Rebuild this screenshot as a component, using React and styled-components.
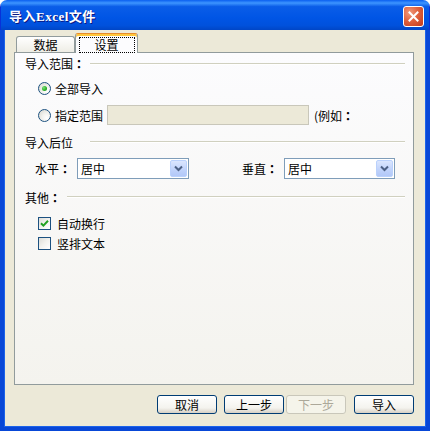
import React from "react";
import styled, { createGlobalStyle } from "styled-components";

const GlobalStyle = createGlobalStyle`
  html, body {
    margin: 0;
    padding: 0;
    background: #ffffff;
  }
  body {
    font-family: "Noto Sans CJK SC", "Liberation Sans", sans-serif;
    font-size: 12px;
    color: #000;
  }
`;

const Window = styled.div`
  width: 430px;
  height: 431px;
  display: flex;
  flex-direction: column;
  border-radius: 7px 7px 0 0;
  overflow: hidden;
`;

const TitleBar = styled.div`
  height: 30px;
  flex-shrink: 0;
  display: flex;
  align-items: center;
  justify-content: space-between;
  padding: 0 5px 0 8px;
  box-sizing: border-box;
  background: linear-gradient(
    #0a5ff0 0%,
    #3d95ff 10%,
    #0a5de8 22%,
    #0055e5 60%,
    #0051dc 85%,
    #0046c6 100%
  );
  border-left: 1px solid #0831d9;
  border-right: 1px solid #0831d9;
`;

const Title = styled.span`
  color: #fff;
  font-family: "Liberation Serif", "Noto Sans CJK SC", serif;
  font-weight: bold;
  font-size: 13px;
  text-shadow: 1px 1px 0 #0a1883;
  letter-spacing: 0.5px;
`;

const CloseButton = styled.button`
  width: 21px;
  height: 21px;
  padding: 0;
  border: 1px solid #fff;
  border-radius: 3px;
  background: radial-gradient(circle at 30% 30%, #f09a7c 0%, #e0623e 45%, #c1391b 100%);
  display: flex;
  align-items: center;
  justify-content: center;
  margin-top: 2px;
`;

const Frame = styled.div`
  flex: 1;
  display: flex;
  flex-direction: column;
  background: #ece9d8;
  border: 4px solid #0847d7;
  border-top: none;
  box-shadow: inset 1px 0 0 #1b63ea, inset -1px 0 0 #1b63ea, inset 0 -1px 0 #1b63ea;
`;

const TabStrip = styled.div`
  display: flex;
  align-items: flex-end;
  height: 20px;
  margin: 3px 0 0 10px;
  padding-left: 2px;
  position: relative;
  z-index: 2;
`;

const Tab = styled.div`
  box-sizing: border-box;
  height: ${(p) => (p.$active ? "20px" : "16px")};
  width: ${(p) => (p.$active ? "63px" : "59px")};
  margin-bottom: ${(p) => (p.$active ? "0" : "1px")};
  border: 1px solid #919b9c;
  border-bottom: none;
  border-top: ${(p) => (p.$active ? "1px solid #e68b2c" : "1px solid #919b9c")};
  border-radius: 3px 3px 0 0;
  background: ${(p) =>
    p.$active ? "#fcfcfe" : "linear-gradient(#ffffff, #eeede5)"};
  box-shadow: ${(p) => (p.$active ? "inset 0 2px 0 #ffc73c" : "none")};
  display: flex;
  align-items: center;
  justify-content: center;
  padding-top: ${(p) => (p.$active ? "2px" : "0")};
`;

const FocusLabel = styled.span`
  box-sizing: border-box;
  width: 56px;
  height: 16px;
  border: 1px dotted #000;
  display: flex;
  align-items: center;
  justify-content: center;
  line-height: 1;
`;

const Panel = styled.div`
  box-sizing: border-box;
  width: 400px;
  height: 333px;
  margin: -1px 0 0 10px;
  border: 1px solid #919b9c;
  background: linear-gradient(#fcfcfe, #f4f3ee);
  padding: 2px 8px 0 10px;
  display: flex;
  flex-direction: column;
`;

const SectionHeader = styled.div`
  height: 16px;
  display: flex;
  align-items: center;
  margin-top: ${(p) => p.$top || 0}px;
  white-space: nowrap;
`;

// full-width colon, centred in its cell
const Colon = styled.span`
  font-family: "Noto Sans CJK TC", "Noto Sans CJK SC", sans-serif;
  font-weight: bold;
`;

const Rule = styled.div`
  flex: 1;
  height: 0;
  border-top: 1px solid #d0d0bf;
  border-bottom: 1px solid #fff;
  margin-left: ${(p) => p.$gap}px;
  margin-top: ${(p) => p.$shift || 0}px;
`;

const OptionRow = styled.div`
  display: flex;
  align-items: center;
  height: ${(p) => p.$h || 18}px;
  margin-top: ${(p) => p.$top || 0}px;
  padding-left: 13px;
  white-space: nowrap;
`;

const Radio = styled.span`
  box-sizing: border-box;
  width: 13px;
  height: 13px;
  border-radius: 50%;
  border: 1px solid #1c5180;
  background: radial-gradient(circle at 70% 70%, #ffffff 0%, #f2f2ee 40%, #d4d4cc 100%);
  display: flex;
  align-items: center;
  justify-content: center;
  flex-shrink: 0;

  &::after {
    content: "";
    width: 5px;
    height: 5px;
    border-radius: 50%;
    background: radial-gradient(circle at 35% 35%, #7be078 0%, #29ad25 60%, #1f8d1b 100%);
    display: ${(p) => (p.$checked ? "block" : "none")};
  }
`;

const Checkbox = styled.span`
  box-sizing: border-box;
  width: 13px;
  height: 13px;
  border: 1px solid #1c5180;
  background: linear-gradient(135deg, #dcdcd7 0%, #f2f2ee 50%, #ffffff 100%);
  display: flex;
  align-items: center;
  justify-content: center;
  flex-shrink: 0;
`;

const OptionText = styled.span`
  margin-left: ${(p) => p.$gap || 4}px;
`;

const RangeInput = styled.div`
  box-sizing: border-box;
  width: 202px;
  height: 20px;
  margin-left: 4px;
  border: 1px solid #c9c7ba;
  background: #ece9d8;
`;

const Hint = styled.span`
  margin-left: 5px;
`;

const ComboRow = styled.div`
  display: flex;
  align-items: center;
  height: 21px;
  margin-top: 8px;
  padding-left: 10px;
`;

const ComboLabel = styled.span`
  margin-left: ${(p) => p.$gap || 0}px;
  white-space: nowrap;
`;

const Combo = styled.div`
  box-sizing: border-box;
  width: ${(p) => p.$w}px;
  height: 21px;
  margin-left: 6px;
  border: 1px solid #7f9db9;
  background: #fff;
  display: flex;
  align-items: center;
  padding: 1px;
`;

const ComboValue = styled.span`
  flex: 1;
  padding-left: 2px;
`;

const DropButton = styled.span`
  box-sizing: border-box;
  width: 17px;
  height: 17px;
  border: 1px solid #bad1fc;
  border-radius: 2px;
  background: linear-gradient(#dbe6fe, #bfd2fb 60%, #b2c8f8);
  display: flex;
  align-items: center;
  justify-content: center;
`;

const ButtonRow = styled.div`
  display: flex;
  justify-content: flex-end;
  margin: 10px 12px 0 0;
`;

const Button = styled.button`
  box-sizing: border-box;
  width: 60px;
  height: 19px;
  margin-left: ${(p) => p.$gap || 0}px;
  padding: 0;
  font-family: "Noto Sans CJK SC", "Liberation Sans", sans-serif;
  font-size: 12px;
  line-height: 1;
  border-radius: 3px;
  border: 1px solid ${(p) => (p.disabled ? "#c9c7ba" : "#003c74")};
  color: ${(p) => (p.disabled ? "#aca899" : "#000")};
  background: ${(p) =>
    p.disabled ? "#f5f4ea" : "linear-gradient(#ffffff, #f4f3ee 70%, #d6d0c5)"};
`;

const Chevron = () => (
  <svg width="9" height="7" viewBox="0 0 9 7">
    <path d="M1 1.5 L4.5 5 L8 1.5" fill="none" stroke="#4d6185" strokeWidth="2" />
  </svg>
);

const CloseX = () => (
  <svg width="11" height="11" viewBox="0 0 11 11">
    <path d="M1.5 1.5 L9.5 9.5 M9.5 1.5 L1.5 9.5" stroke="#fff" strokeWidth="2" strokeLinecap="square" />
  </svg>
);

const Tick = () => (
  <svg width="9" height="9" viewBox="0 0 9 9">
    <path d="M1 4.2 L3.4 6.6 L8 1.8" fill="none" stroke="#21a121" strokeWidth="2" />
  </svg>
);

export default function App() {
  return (
    <>
      <GlobalStyle />
      <Window>
        <TitleBar>
          <Title>导入Excel文件</Title>
          <CloseButton>
            <CloseX />
          </CloseButton>
        </TitleBar>
        <Frame>
          <TabStrip>
            <Tab>数据</Tab>
            <Tab $active>
              <FocusLabel>设置</FocusLabel>
            </Tab>
          </TabStrip>
          <Panel>
            <SectionHeader>
              导入范围<Colon>：</Colon>
              <Rule $gap={5} $shift={2} />
            </SectionHeader>
            <OptionRow $h={20} $top={7}>
              <Radio $checked />
              <OptionText>全部导入</OptionText>
            </OptionRow>
            <OptionRow $h={22} $top={6}>
              <Radio />
              <OptionText>指定范围</OptionText>
              <RangeInput />
              <Hint>
                (例如<Colon>：</Colon>
              </Hint>
            </OptionRow>

            <SectionHeader $top={8}>
              导入后位
              <Rule $gap={17} />
            </SectionHeader>
            <ComboRow>
              <ComboLabel>
                水平<Colon>：</Colon>
              </ComboLabel>
              <Combo $w={112}>
                <ComboValue>居中</ComboValue>
                <DropButton>
                  <Chevron />
                </DropButton>
              </Combo>
              <ComboLabel $gap={53}>
                垂直<Colon>：</Colon>
              </ComboLabel>
              <Combo $w={111}>
                <ComboValue>居中</ComboValue>
                <DropButton>
                  <Chevron />
                </DropButton>
              </Combo>
            </ComboRow>

            <SectionHeader $top={10}>
              其他<Colon>：</Colon>
              <Rule $gap={6} />
            </SectionHeader>
            <OptionRow $top={9}>
              <Checkbox>
                <Tick />
              </Checkbox>
              <OptionText $gap={6}>自动换行</OptionText>
            </OptionRow>
            <OptionRow $top={2}>
              <Checkbox />
              <OptionText $gap={6}>竖排文本</OptionText>
            </OptionRow>
          </Panel>
          <ButtonRow>
            <Button>取消</Button>
            <Button $gap={7}>上一步</Button>
            <Button $gap={2} disabled>
              下一步
            </Button>
            <Button $gap={8}>导入</Button>
          </ButtonRow>
        </Frame>
      </Window>
    </>
  );
}
